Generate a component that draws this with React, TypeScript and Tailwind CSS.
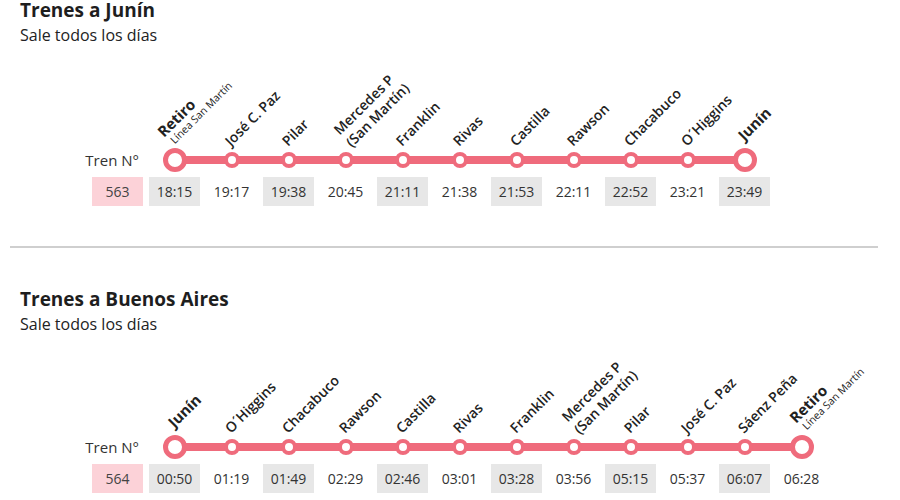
import React from "react";

type Station = {
  lines: string[];
  sub?: string;
  big?: boolean;
  shift?: boolean;
};

const PINK = "bg-[#ef6b7c]";

const topStations: Station[] = [
  { lines: ["Retiro"], sub: "Línea San Martín", big: true },
  { lines: ["José C. Paz"] },
  { lines: ["Pilar"] },
  { lines: ["Mercedes P", "(San Martín)"] },
  { lines: ["Franklin"] },
  { lines: ["Rivas"] },
  { lines: ["Castilla"] },
  { lines: ["Rawson"] },
  { lines: ["Chacabuco"] },
  { lines: ["O´Higgins"] },
  { lines: ["Junín"], big: true },
];
const topTimes = ["18:15", "19:17", "19:38", "20:45", "21:11", "21:38", "21:53", "22:11", "22:52", "23:21", "23:49"];

const bottomStations: Station[] = [
  { lines: ["Junín"], big: true },
  { lines: ["O´Higgins"] },
  { lines: ["Chacabuco"] },
  { lines: ["Rawson"] },
  { lines: ["Castilla"] },
  { lines: ["Rivas"] },
  { lines: ["Franklin"] },
  { lines: ["Mercedes P", "(San Martín)"] },
  { lines: ["Pilar"] },
  { lines: ["José C. Paz"] },
  { lines: ["Sáenz Peña"] },
  { lines: ["Retiro"], sub: "Línea San Martín", big: true, shift: true },
];
const bottomTimes = ["00:50", "01:19", "01:49", "02:29", "02:46", "03:01", "03:28", "03:56", "05:15", "05:37", "06:07", "06:28"];

function Label({ s }: { s: Station }) {
  if (s.sub) {
    return (
      <div
        className={
          s.shift
            ? "absolute left-[calc(50%+4px)] bottom-[25px] origin-bottom-left -rotate-45 whitespace-nowrap text-[#222]"
            : "absolute left-[calc(50%-1px)] bottom-[24px] origin-bottom-left -rotate-45 whitespace-nowrap text-[#222]"
        }
      >
        <div className="text-[15px] leading-[16px] font-bold">{s.lines[0]}</div>
        <div className="text-[10.5px] leading-[12px] pl-[3px]">{s.sub}</div>
      </div>
    );
  }
  if (s.lines.length > 1) {
    return (
      <div className="absolute left-[calc(50%+8px)] bottom-[22px] origin-bottom-left -rotate-45 whitespace-nowrap text-[14px] leading-[17px] font-semibold text-[#222]">
        {s.lines.map((l) => (
          <div key={l}>{l}</div>
        ))}
      </div>
    );
  }
  return (
    <div
      className={
        s.big
          ? "absolute left-[calc(50%+1px)] bottom-[29px] origin-bottom-left -rotate-45 whitespace-nowrap text-[15px] leading-[16px] font-bold text-[#222]"
          : "absolute left-[calc(50%+1px)] bottom-[23px] origin-bottom-left -rotate-45 whitespace-nowrap text-[14px] leading-[16px] font-semibold text-[#222]"
      }
    >
      {s.lines[0]}
    </div>
  );
}

function Diagram({ num, stations, times }: { num: string; stations: Station[]; times: string[] }) {
  const cols = stations.length + 1;
  const gridStyle = { gridTemplateColumns: `repeat(${cols}, 51px)` };
  return (
    <div className="pl-[92px]">
      <div className="relative grid gap-x-[6px] h-[24px]" style={gridStyle}>
        <div className={`absolute top-[8px] h-[8px] left-[82.5px] ${PINK}`} style={{ width: `${(stations.length - 1) * 57}px` }} />
        <div className="relative flex items-center justify-end whitespace-nowrap text-[15px] text-[#333] pr-[4px]">Tren N°</div>
        {stations.map((s, i) => (
          <div key={i} className="relative flex items-center justify-center">
            <Label s={s} />
            {s.big ? (
              <div className="relative w-[24px] h-[24px] rounded-full bg-white border-[5px] border-[#ef6b7c]" />
            ) : (
              <div className="relative w-[16px] h-[16px] rounded-full bg-white border-[4px] border-[#ef6b7c]" />
            )}
          </div>
        ))}
      </div>
      <div className="grid gap-x-[6px] mt-[5px]" style={gridStyle}>
        <div className="h-[29px] flex items-center justify-center bg-[#fcd2d8] text-[14px] text-[#444]">{num}</div>
        {times.map((t, i) => (
          <div
            key={i}
            className={`h-[29px] flex items-center justify-center text-[14px] text-[#333] ${i % 2 === 0 ? "bg-[#e7e7e7]" : ""}`}
          >
            {t}
          </div>
        ))}
      </div>
    </div>
  );
}

function Header({ title }: { title: string }) {
  return (
    <div className="pl-[20px]">
      <h2 className="text-[19px] leading-[20px] font-bold text-[#1e1e1e]">{title}</h2>
      <p className="mt-[5px] text-[16px] leading-[20px] text-[#222]">Sale todos los días</p>
    </div>
  );
}

export default function App() {
  return (
    <div className="w-[900px] h-[500px] bg-white overflow-hidden font-['Open_Sans',sans-serif]">
      <Header title="Trenes a Junín" />
      <div className="mt-[103px]">
        <Diagram num="563" stations={topStations} times={topTimes} />
      </div>
      <div className="mt-[40px] ml-[10px] w-[868px] h-[2px] bg-[#cfcfcf]" />
      <div className="mt-[41px]">
        <Header title="Trenes a Buenos Aires" />
      </div>
      <div className="mt-[101px]">
        <Diagram num="564" stations={bottomStations} times={bottomTimes} />
      </div>
    </div>
  );
}
